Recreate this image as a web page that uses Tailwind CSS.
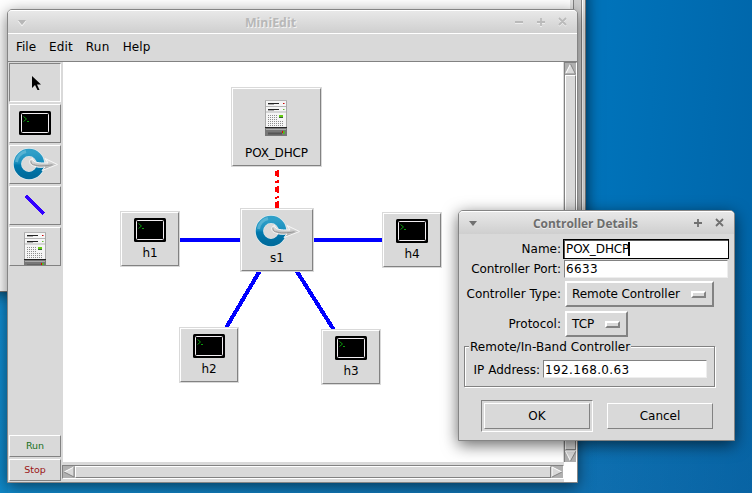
<!DOCTYPE html>
<html lang="en"><head><meta charset="utf-8"><title>MiniEdit</title>
<script src="https://cdn.jsdelivr.net/npm/@tailwindcss/browser@4"></script></head>
<body class="relative w-[752px] h-[493px] overflow-hidden bg-linear-to-r from-[#118bcd] to-[#1070b0] to-78% font-['DejaVu_Sans',sans-serif] text-[12px] leading-[14px] text-black">
<svg class="absolute w-0 h-0">
 <defs>
  <linearGradient id="ring" x1="0" y1="0" x2="0" y2="1"><stop offset="0" stop-color="#2f9fc8"/><stop offset=".45" stop-color="#1a8fbe"/><stop offset=".55" stop-color="#0079ad"/><stop offset="1" stop-color="#006c9d"/></linearGradient>
  <linearGradient id="arr" x1="0" y1="0" x2="0" y2="1"><stop offset="0" stop-color="#ededed"/><stop offset="1" stop-color="#a0a0a0"/></linearGradient>
 </defs>
 <symbol id="term" viewBox="0 0 32 24"><rect width="32" height="24" rx="1.5" fill="#000"/><rect x="2.5" y="2.5" width="27" height="19" rx="1" fill="#000" stroke="#f2eef2"/><path d="M4.5 5.5l3 2.5-3 2.5M8 10.5h2" fill="none" stroke="#0c9a0c"/></symbol>
 <symbol id="switch" viewBox="0 0 45 32"><circle cx="16" cy="16" r="11.700" fill="none" stroke="#dfecf0" stroke-width="8.500"/><circle cx="16" cy="16" r="11.600" fill="none" stroke="url(#ring)" stroke-width="7.400"/><path d="M3.500 14A12.500 12.500 0 0 1 13 3.500" fill="none" stroke="#7cc4dc" stroke-width="3" opacity=".55"/><path d="M21 18c-5-1-6-6-1.500-7.500 1 4.500 6 4.500 15.500 4.500l-3-4.500L44.500 16.500 29 22.500l3-3.500c-4 .5-8 .5-11-1z" fill="url(#arr)" stroke="#f6f6f6" stroke-width="1"/><path d="M20.500 16.500c4 2 12 1.500 19 .3M18 12.500c-.3 2 .5 3.500 2.500 4.500" fill="none" stroke="#929292" stroke-width=".9"/></symbol>
 <symbol id="server" viewBox="0 0 22 36"><rect x=".5" y=".5" width="21" height="35" fill="#f5f5f5" stroke="#aaa"/><path d="M0 .5h22M1 6.500h20M1 12h20" stroke="#b5b5b5"/><path d="M3 3.500h11M3 9.500h11" stroke="#222"/><path d="M3 4.500h6M3 10.500h6" stroke="#aaa"/><path d="M18 3.500h1.500" stroke="#c00"/><path d="M18 9.500h1.500" stroke="#6b3"/><path d="M3 15.500h9M3 17.500h9M3 19.500h9M3 21.500h15M3 23.500h15M3 25.500h15" stroke="#8d8d8d" stroke-dasharray="1 1"/><path d="M14 15h4v2h-4z" fill="#6c1"/><path d="M14 17h4v1h-4z" fill="#363"/><rect x="0" y="28" width="22" height="8" fill="#777"/><path d="M0 27.500h22" stroke="#222"/><path d="M1 29.500h20" stroke="#aaa"/><path d="M3 33.500h14" stroke="#555" stroke-width="2"/><path d="M17 31h1v2h-1z" fill="#d00"/><path d="M18 31h1.500v3H18z" fill="#4c1"/></symbol>
</svg>

<!-- desktop, upper right -->
<div class="absolute left-[586px] top-0 w-[166px] h-full bg-[linear-gradient(94deg,transparent_10%,#00559577_100%),linear-gradient(180deg,#0073ba_45%,#1070b0_100%)]"></div>
<div class="absolute left-0 top-[292px] w-2 h-[201px] bg-linear-to-b from-[#118dd2] to-[#0f88c8]"></div>
<!-- window behind -->
<div class="absolute left-[-20px] top-[-20px] w-[606px] h-[312px] bg-white border border-[#777] shadow-[0_2px_14px_#0009] flex justify-end">
  <div class="w-[3px] bg-[#e2e2e2]"></div><div class="w-2 bg-[#d0d0d0] border-l border-[#828282]"></div><div class="w-1 bg-[#dcdcdb] border-l border-[#828282] shadow-[inset_1px_0_white]"></div>
</div>

<!-- main window -->
<section class="absolute left-[7px] top-[9px] w-[571px] h-[474px] rounded-t-[5px] bg-[#d9d9d9] border border-[#858585] shadow-[0_4px_16px_#0008] flex flex-col">
  <header class="h-[23px] shrink-0 rounded-t-[4px] bg-linear-to-b from-[#e8e8e8] to-[#cfcfcf] border-t border-white flex items-center">
    <svg class="w-full h-[22px]" viewBox="0 0 569 22"><path d="M10 9h8l-4 5z" fill="#b7b7b7"/><path d="M10 10l4 5 4-5" fill="none" stroke="#f5f5f5" stroke-width=".8"/><text x="263.500" y="17" text-anchor="middle" textLength="51" lengthAdjust="spacingAndGlyphs" class="font-['Open_Sans',sans-serif] font-bold text-[13px] fill-white/70">MiniEdit</text><text x="262.500" y="16" text-anchor="middle" textLength="51" lengthAdjust="spacingAndGlyphs" class="font-['Open_Sans',sans-serif] font-bold text-[13px] fill-[#b8b8b8]">MiniEdit</text><g fill="none" stroke="#f4f4f4" stroke-width="1.500" transform="translate(0 1)"><path d="M507 11h8M529 11h8M533 7v8M551 7l7 7M558 7l-7 7"/></g><path d="M507 11h8M529 11h8M533 7v8M551 7l7 7M558 7l-7 7" fill="none" stroke="#bababa" stroke-width="1.800"/></svg>
  </header>
  <nav class="h-[29px] shrink-0 border-t border-t-white border-b border-b-[#828282] flex items-center pl-2 pb-px gap-[13px]"><span>File</span><span class="tracking-[.1px]">Edit</span><span class="tracking-[.3px]">Run</span><span class="tracking-[.1px]">Help</span></nav>
  <div class="flex flex-1 min-h-0">
    <aside class="w-[55px] shrink-0 pl-px pt-px pb-px flex flex-col gap-0.5">
      <div class="w-[52px] h-[39px] border border-[#828282] border-r-white border-b-white flex items-center justify-center pl-0.5 pt-0.5"><svg class="w-[9px] h-[15px]" viewBox="0 0 9 15"><path d="M0 0v12l3-3 2.500 5h2L5 8.500h4z"/></svg></div>
      <div class="w-[52px] h-[39px] border border-white border-r-[#828282] border-b-[#828282] flex items-center justify-center pb-[1px]"><svg class="w-8 h-6"><use href="#term"/></svg></div>
      <div class="w-[52px] h-[39px] border border-white border-r-[#828282] border-b-[#828282] flex items-center justify-center pb-px"><svg class="w-[45px] h-8"><use href="#switch"/></svg></div>
      <div class="w-[52px] h-[39px] border border-white border-r-[#828282] border-b-[#828282] flex items-center justify-center pb-px"><svg class="w-5 h-5" viewBox="0 0 20 20" shape-rendering="crispEdges"><path d="M1 1l18 18" stroke="#3200ff" stroke-width="3.600"/></svg></div>
      <div class="w-[52px] h-[39px] border border-white border-r-[#828282] border-b-[#828282] flex justify-center pt-1 overflow-hidden"><svg class="w-[22px] h-9 shrink-0"><use href="#server"/></svg></div>
      <div class="mt-auto w-[52px] h-[22px] border border-white border-r-[#828282] border-b-[#828282] text-[9.500px] leading-5 text-center text-[#17701b]">Run</div>
      <div class="w-[52px] h-[22px] border border-white border-r-[#828282] border-b-[#828282] text-[9.500px] leading-5 text-center text-[#9b1515]">Stop</div>
    </aside>
    <div class="flex-1 flex flex-col">
      <div class="flex flex-1">
        <!-- topology canvas -->
        <div class="relative w-[500px] bg-white">
          <svg class="absolute left-0 top-0" width="500" height="400" viewBox="63 62 500 400" shape-rendering="crispEdges"><path d="M150 240H412M278 240L210 355M277 240L351 357" fill="none" stroke="#00f" stroke-width="4"/><path d="M277 171v5M277 181v2M277 187v5M277 202v6" stroke="#f00" stroke-width="4"/><path d="M278 170v7M278 180v3M278 186v7M276 197v2M278 196v2M278 201v7" stroke="#f00" stroke-width="2"/></svg>
          <div class="absolute left-[168px] top-[25px] w-[91px] h-20 bg-[#d9d9d9] p-px"><div class="h-full border border-white border-r-[#828282] border-b-[#828282] flex flex-col items-center pt-[11px]"><svg class="w-[22px] h-9 -ml-px"><use href="#server"/></svg><span class="mt-[10px] tracking-[-.15px]">POX_DHCP</span></div></div>
          <div class="absolute left-[177px] top-[146px] w-[74px] h-16 bg-[#d9d9d9] p-px"><div class="h-full border border-white border-r-[#828282] border-b-[#828282] flex flex-col items-center pt-[5px]"><svg class="w-[45px] h-8"><use href="#switch"/></svg><span class="mt-1">s1</span></div></div>
          <div class="absolute left-[57px] top-[149px] w-[60px] h-14 bg-[#d9d9d9] p-px"><div class="h-full border border-white border-r-[#828282] border-b-[#828282] flex flex-col items-center pt-[5px]"><svg class="w-8 h-6"><use href="#term"/></svg><span class="mt-1">h1</span></div></div>
          <div class="absolute left-[116px] top-[265px] w-[60px] h-14 bg-[#d9d9d9] p-px"><div class="h-full border border-white border-r-[#828282] border-b-[#828282] flex flex-col items-center pt-[5px]"><svg class="w-8 h-6"><use href="#term"/></svg><span class="mt-1">h2</span></div></div>
          <div class="absolute left-[258px] top-[267px] w-[60px] h-14 bg-[#d9d9d9] p-px"><div class="h-full border border-white border-r-[#828282] border-b-[#828282] flex flex-col items-center pt-[5px]"><svg class="w-8 h-6"><use href="#term"/></svg><span class="mt-1">h3</span></div></div>
          <div class="absolute left-[319px] top-[150px] w-[60px] h-14 bg-[#d9d9d9] p-px"><div class="h-full border border-white border-r-[#828282] border-b-[#828282] flex flex-col items-center pt-[5px]"><svg class="w-8 h-6"><use href="#term"/></svg><span class="mt-1">h4</span></div></div>
        </div>
        <div class="ml-px w-[13px] bg-[#b0b0b0] border-l border-t border-[#828282] border-r border-r-white flex flex-col">
          <svg class="w-[11px] h-3" viewBox="0 0 11 12"><path d="M5.500 1L11 11H0z" fill="#d9d9d9"/><path d="M5.500 1L.5 11" stroke="#fff"/><path d="M5.500 1l5 10H0" fill="none" stroke="#828282"/></svg>
          <div class="flex-1 bg-[#d9d9d9] border border-white border-r-[#828282] border-b-[#828282]"></div>
          <svg class="w-[11px] h-3" viewBox="0 0 11 12"><path d="M0 1h11L5.500 11z" fill="#d9d9d9"/><path d="M11 1H.5l5 10" fill="none" stroke="#fff"/><path d="M11 1L5.500 11" stroke="#828282"/></svg>
        </div>
      </div>
      <div class="h-5 flex">
        <div class="w-[502px] pt-[3px] pb-[3px] -ml-px bg-[#d9d9d9]"><div class="h-[14px] bg-[#b0b0b0] border border-[#828282] border-r-white border-b-white flex">
          <svg class="w-3 h-3" viewBox="0 0 12 12"><path d="M1 6L11 1v10z" fill="#d9d9d9"/><path d="M1 6l10-5" stroke="#fff"/><path d="M1 6l10 5V1" fill="none" stroke="#828282"/></svg>
          <div class="flex-1 bg-[#d9d9d9] border border-white border-r-[#828282] border-b-[#828282]"></div>
          <svg class="w-3 h-3" viewBox="0 0 12 12"><path d="M1 1v10l10-5z" fill="#d9d9d9"/><path d="M1 11V1l10 5" fill="none" stroke="#fff"/><path d="M1 11l10-5" stroke="#828282"/></svg></div></div>
        <div class="flex-1 bg-white"></div>
      </div>
    </div>
  </div>
</section>

<!-- controller details dialog -->
<section class="absolute left-[458px] top-[210px] w-[277px] h-[231px] rounded-t-[5px] bg-[#d9d9d9] border border-[#858585] shadow-[0_4px_16px_#0009] flex flex-col">
  <header class="h-[23px] shrink-0 rounded-t-[4px] bg-linear-to-b from-[#e8e8e8] to-[#cfcfcf] border-t border-white">
    <svg class="w-full h-[22px]" viewBox="0 0 275 22"><path d="M10 9h8l-4 5z" fill="#707070"/><text x="126.500" y="17" text-anchor="middle" textLength="105" lengthAdjust="spacingAndGlyphs" class="font-['Open_Sans',sans-serif] font-bold text-[13px] fill-white/60">Controller Details</text><text x="126.500" y="16" text-anchor="middle" textLength="105" lengthAdjust="spacingAndGlyphs" class="font-['Open_Sans',sans-serif] font-bold text-[13px] fill-[#6d6d6d]">Controller Details</text><path d="M235 11h8M239 7v8M257 7l7 7M264 7l-7 7" fill="none" stroke="#707070" stroke-width="1.800"/></svg>
  </header>
  <div class="flex-1">
    <div class="mt-[5px] flex h-5 items-center"><label class="w-[102px] text-right">Name:</label><div class="ml-[2px] w-[166px] h-5 bg-white border border-black shadow-[inset_1px_1px_#555] pl-[2px] leading-[18px] flex items-center"><span class="tracking-[-.1px]">POX_DHCP</span><i class="-ml-px w-0.5 h-[14px] bg-black"></i></div></div>
    <div class="mt-px flex h-[18px] items-center"><label class="w-[102px] text-right tracking-[-.05px]">Controller Port:</label><div class="ml-[3px] w-[164px] h-[18px] bg-white border border-[#828282] border-r-[#eee] border-b-[#eee] pl-px leading-4 tracking-[.36px]">6633</div></div>
    <div class="mt-[3px] flex h-[26px] items-center"><label class="w-[102px] text-right">Controller Type:</label><div class="ml-1 w-[149px] h-[26px] border-2 border-white border-r-[#828282] border-b-[#828282] pl-[5px] pr-[6px] flex items-center justify-between"><span class="tracking-[-.08px]">Remote Controller</span><b class="w-[15px] h-[7px] border-2 border-white border-r-[#828282] border-b-[#828282]"></b></div></div>
    <div class="mt-1 flex h-[26px] items-center"><label class="w-[102px] text-right">Protocol:</label><div class="ml-1 w-[63px] h-[26px] border-2 border-white border-r-[#828282] border-b-[#828282] pl-[5px] pr-[6px] flex items-center justify-between"><span>TCP</span><b class="w-[15px] h-[7px] border-2 border-white border-r-[#828282] border-b-[#828282]"></b></div></div>
    <fieldset class="mt-[3px] ml-[5px] w-[251px] h-[47px] border border-[#828282] shadow-[inset_1px_1px_white,1px_1px_white] pl-0.5"><legend class="ml-[2px] h-[13px] leading-[15px] bg-[#d9d9d9] px-px tracking-[.05px]">Remote/In-Band Controller</legend>
      <div class="mt-[7px] flex h-[18px] items-center"><label class="w-[73px] pt-px text-right">IP Address:</label><div class="ml-[3px] w-[164px] h-[18px] bg-white border border-[#828282] border-r-[#eee] border-b-[#eee] pl-px leading-[18px] tracking-[.36px]">192.168.0.63</div></div>
    </fieldset>
    <div class="mt-[13px] ml-[22px] flex items-center gap-[14px]"><div class="w-28 h-8 border border-[#828282] border-r-white border-b-white p-[2px]"><button class="block w-[106px] h-[26px] border border-white border-r-[#828282] border-b-[#828282]">OK</button></div><button class="w-[106px] h-[26px] border border-white border-r-[#828282] border-b-[#828282]">Cancel</button></div>
  </div>
</section>
</body></html>
